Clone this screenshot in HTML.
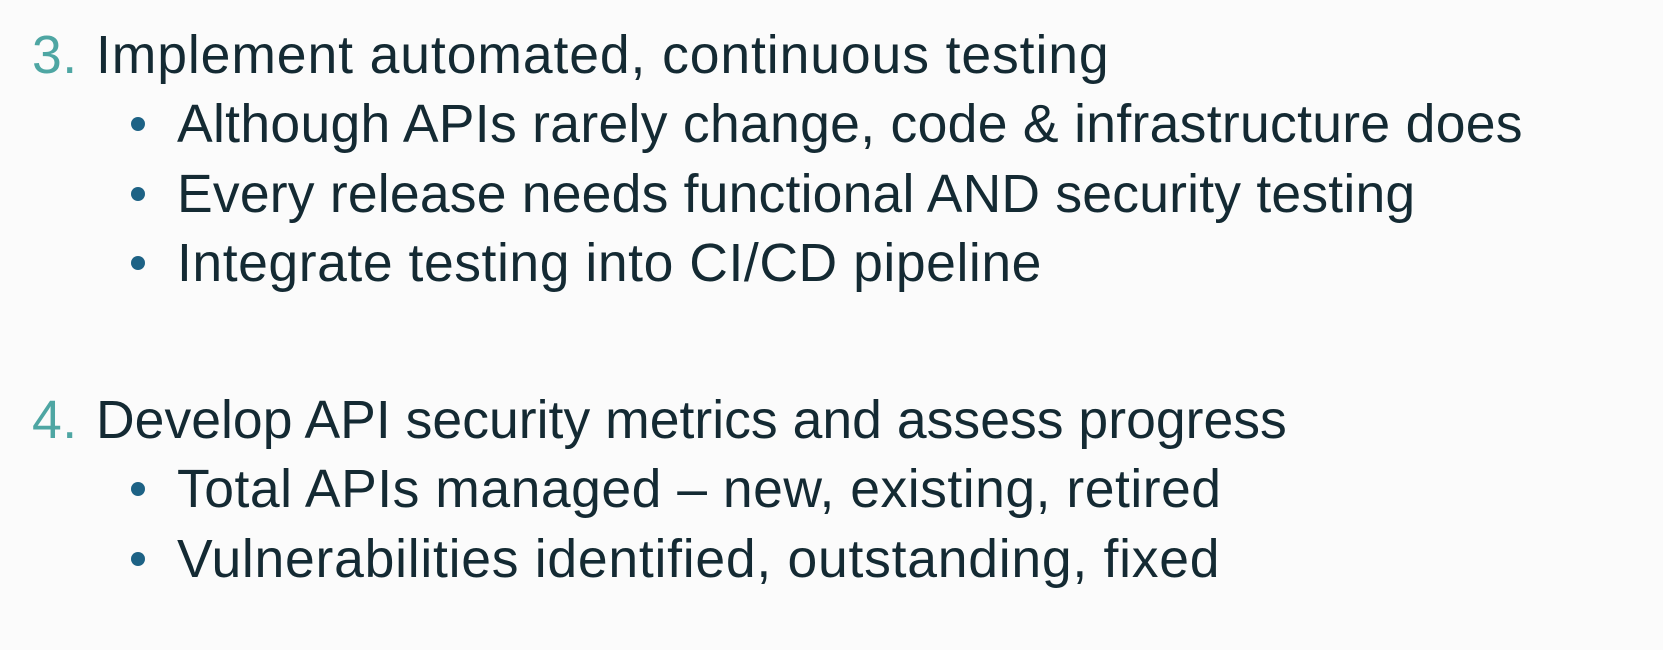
<!DOCTYPE html>
<html><head><meta charset="utf-8"><style>
html,body{margin:0;padding:0;background:#fbfbfb;width:1663px;height:650px;overflow:hidden}
.l{position:absolute;font-family:"Liberation Sans",sans-serif;font-size:53.5px;letter-spacing:0.5px;color:#142a33;white-space:nowrap;line-height:1}
.n{color:#4ea6a3}
.b{position:absolute;width:14px;height:14px;border-radius:50%;background:#1d6285}
</style></head><body>
<div class="l" style="left:32px;top:29px"><span class="n">3.</span></div>
<div class="l" style="left:96px;top:29px;letter-spacing:0.9px">Implement automated, continuous testing</div>
<div class="b" style="left:131px;top:117px"></div>
<div class="l" style="left:177px;top:98px;letter-spacing:0.3px">Although APIs rarely change, code &amp; infrastructure does</div>
<div class="b" style="left:131px;top:187px"></div>
<div class="l" style="left:177px;top:168px;letter-spacing:0.2px">Every release needs functional AND security testing</div>
<div class="b" style="left:131px;top:256px"></div>
<div class="l" style="left:177px;top:237px;letter-spacing:0.55px">Integrate testing into CI/CD pipeline</div>
<div class="l" style="left:32px;top:394px"><span class="n">4.</span></div>
<div class="l" style="left:96px;top:394px;letter-spacing:0.03px">Develop API security metrics and assess progress</div>
<div class="b" style="left:131px;top:482px"></div>
<div class="l" style="left:177px;top:463px;letter-spacing:0.5px">Total APIs managed – new, existing, retired</div>
<div class="b" style="left:131px;top:552px"></div>
<div class="l" style="left:177px;top:533px;letter-spacing:0.74px">Vulnerabilities identified, outstanding, fixed</div>
</body></html>
